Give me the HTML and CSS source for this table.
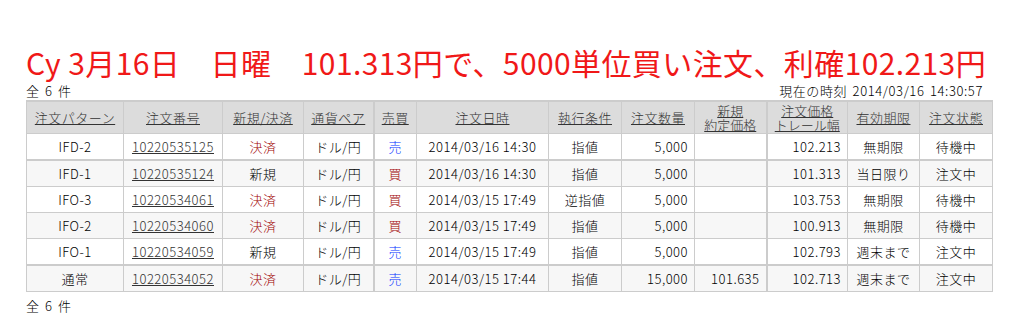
FILE: index.html
```html
<!DOCTYPE html>
<html lang="ja">
<head>
<meta charset="utf-8">
<title>注文一覧</title>
<link rel="stylesheet" href="styles.css">
</head>
<body>
<div class="page">
  <h1 class="title">Cy 3月16日　日曜　101.313円で、5000単位買い注文、利確102.213円</h1>
  <div class="info">
    <span>全 6 件</span>
    <span>現在の時刻 2014/03/16 14:30:57</span>
  </div>
  <table class="orders">
    <colgroup>
      <col class="w97"><col class="w99"><col class="w81"><col class="w70"><col class="w43"><col class="w132">
      <col class="w73"><col class="w73"><col class="w72"><col class="w81"><col class="w72"><col class="w73">
    </colgroup>
    <thead>
      <tr>
        <th><a>注文パターン</a></th>
        <th><a>注文番号</a></th>
        <th><a>新規/決済</a></th>
        <th><a>通貨ペア</a></th>
        <th class="tl"><a>売買</a></th>
        <th><a>注文日時</a></th>
        <th><a>執行条件</a></th>
        <th><a>注文数量</a></th>
        <th class="two"><a>新規<br>約定価格</a></th>
        <th class="two tl"><a>注文価格<br>トレール幅</a></th>
        <th><a>有効期限</a></th>
        <th><a>注文状態</a></th>
      </tr>
    </thead>
    <tbody>
      <tr>
        <td>IFD-2</td><td><a>10220535125</a></td><td class="red">決済</td><td>ドル/円</td><td class="tl blue">売</td>
        <td>2014/03/16 14:30</td><td>指値</td><td class="num">5,000</td><td class="num"></td><td class="num tl">102.213</td><td>無期限</td><td>待機中</td>
      </tr>
      <tr class="alt sep">
        <td>IFD-1</td><td><a>10220535124</a></td><td>新規</td><td>ドル/円</td><td class="tl red">買</td>
        <td>2014/03/16 14:30</td><td>指値</td><td class="num">5,000</td><td class="num"></td><td class="num tl">101.313</td><td>当日限り</td><td>注文中</td>
      </tr>
      <tr>
        <td>IFO-3</td><td><a>10220534061</a></td><td class="red">決済</td><td>ドル/円</td><td class="tl red">買</td>
        <td>2014/03/15 17:49</td><td>逆指値</td><td class="num">5,000</td><td class="num"></td><td class="num tl">103.753</td><td>無期限</td><td>待機中</td>
      </tr>
      <tr class="alt">
        <td>IFO-2</td><td><a>10220534060</a></td><td class="red">決済</td><td>ドル/円</td><td class="tl red">買</td>
        <td>2014/03/15 17:49</td><td>指値</td><td class="num">5,000</td><td class="num"></td><td class="num tl">100.913</td><td>無期限</td><td>待機中</td>
      </tr>
      <tr>
        <td>IFO-1</td><td><a>10220534059</a></td><td>新規</td><td>ドル/円</td><td class="tl blue">売</td>
        <td>2014/03/15 17:49</td><td>指値</td><td class="num">5,000</td><td class="num"></td><td class="num tl">102.793</td><td>週末まで</td><td>注文中</td>
      </tr>
      <tr class="alt sep">
        <td>通常</td><td><a>10220534052</a></td><td class="red">決済</td><td>ドル/円</td><td class="tl blue">売</td>
        <td>2014/03/15 17:44</td><td>指値</td><td class="num">15,000</td><td class="num">101.635</td><td class="num tl">102.713</td><td>週末まで</td><td>注文中</td>
      </tr>
    </tbody>
  </table>
  <div class="info">
    <span>全 6 件</span>
  </div>
</div>
</body>
</html>
```

FILE: styles.css
```css
html, body {
  margin: 0;
  padding: 0;
  background: #fff;
}
body {
  font-family: "Noto Sans CJK JP", "Noto Sans", sans-serif;
  color: #000;
}
.page {
  padding: 47px 0 0 26px;
  width: 967px;
}
.title {
  margin: 0;
  font-size: 30px;
  line-height: 30px;
  font-weight: normal;
  letter-spacing: 0.4px;
  color: #f01818;
  white-space: nowrap;
}
.info {
  display: flex;
  justify-content: space-between;
  font-size: 13px;
  line-height: 13px;
  font-weight: 300;
  margin: 7px 0 3px 0;
  padding-right: 10px;
  letter-spacing: 0.6px;
  word-spacing: 2px;
}
.orders {
  border-collapse: collapse;
  table-layout: fixed;
  width: 967px;
  font-size: 13px;
  font-weight: 300;
  letter-spacing: 0.5px;
  border-top: 2px solid #ccc;
}
.w97 { width: 97px; }
.w99 { width: 99px; }
.w81 { width: 81px; }
.w70 { width: 70px; }
.w43 { width: 43px; }
.w132 { width: 132px; }
.w73 { width: 73px; }
.w72 { width: 72px; }
.orders th,
.orders td {
  border: 1px solid #ccc;
  padding: 0 6px;
  text-align: center;
  vertical-align: middle;
  white-space: nowrap;
  overflow: hidden;
}
.orders th {
  background: #dcdcdc;
  font-weight: 300;
  height: 31px;
  line-height: 14px;
  color: #333;
}
.orders th.two {
  line-height: 14px;
  letter-spacing: 0;
}
.orders th a,
.orders td a {
  color: #333;
  text-decoration: underline;
}
.orders td {
  height: 25px;
  line-height: 14px;
}
.orders .tl {
  border-left: 2px solid #ccc;
}
.orders tr.sep td {
  border-top: 2px solid #ccc;
}
.orders tr.alt td {
  background: #f7f7f7;
}
.orders td.num {
  text-align: right;
}
.orders td.red {
  color: #a00000;
}
.orders td.blue {
  color: #0033ff;
}
```
